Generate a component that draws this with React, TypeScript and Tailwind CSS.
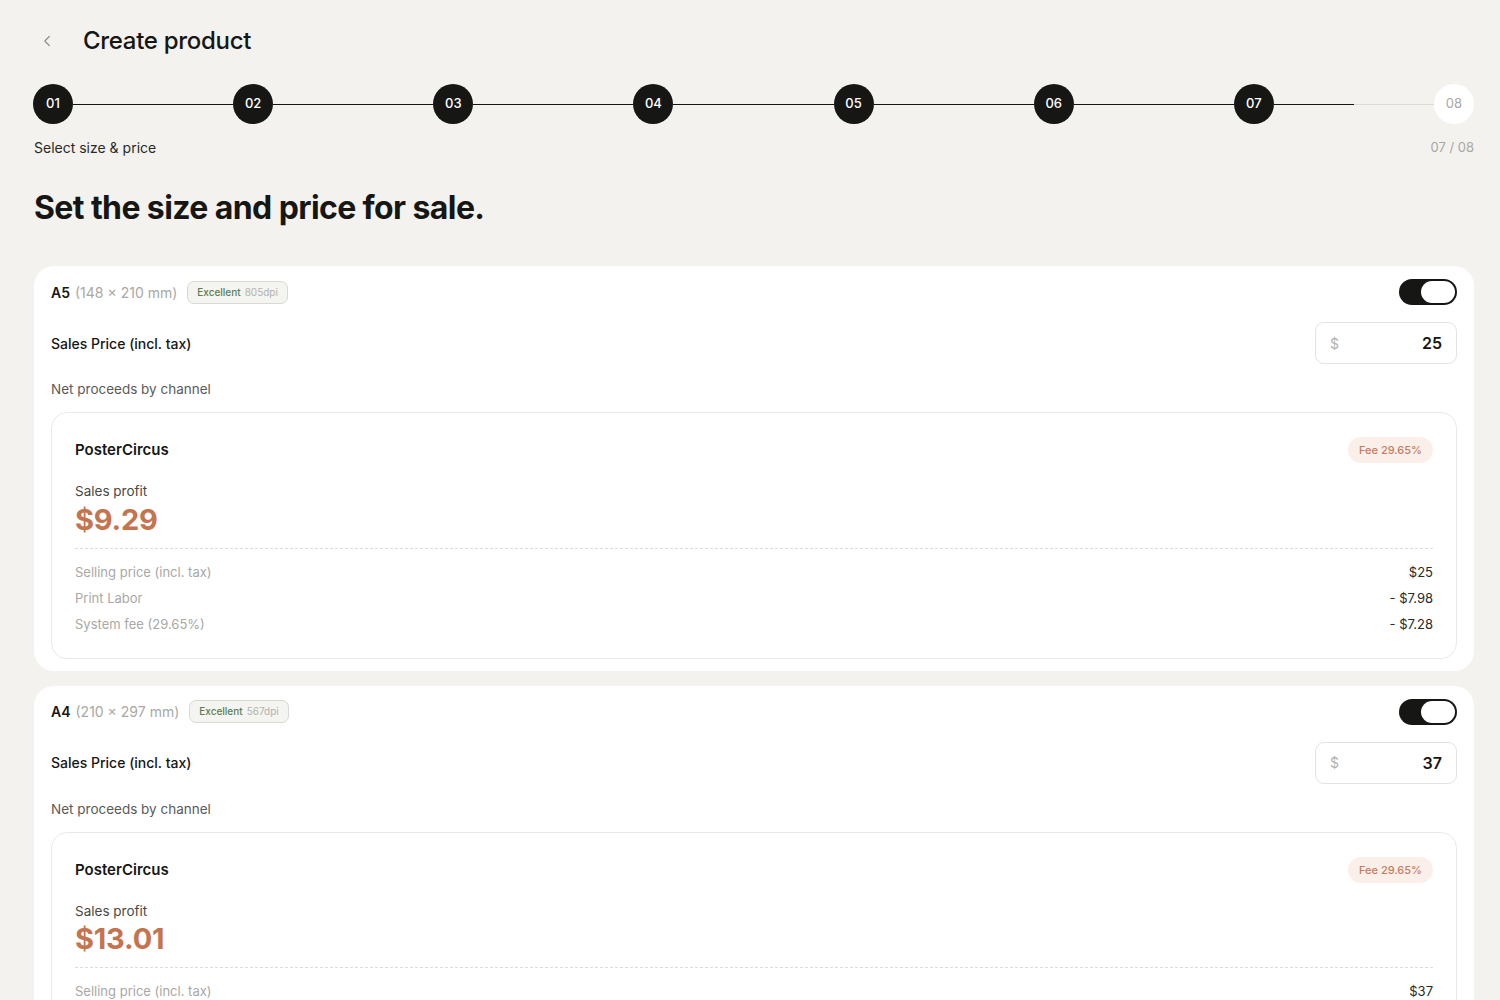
import React from 'react';
import { ChevronLeft } from 'lucide-react';

type Line = { label: string; value: string };

type Size = {
  code: string;
  dims: string;
  dpi: string;
  price: string;
  profit: string;
  lines: Line[];
};

const sizes: Size[] = [
  {
    code: 'A5',
    dims: '(148 × 210 mm)',
    dpi: '805dpi',
    price: '25',
    profit: '$9.29',
    lines: [
      { label: 'Selling price (incl. tax)', value: '$25' },
      { label: 'Print Labor', value: '- $7.98' },
      { label: 'System fee (29.65%)', value: '- $7.28' },
    ],
  },
  {
    code: 'A4',
    dims: '(210 × 297 mm)',
    dpi: '567dpi',
    price: '37',
    profit: '$13.01',
    lines: [
      { label: 'Selling price (incl. tax)', value: '$37' },
      { label: 'Print Labor', value: '- $10.98' },
      { label: 'System fee (29.65%)', value: '- $10.97' },
    ],
  },
];

const steps = ['01', '02', '03', '04', '05', '06', '07', '08'];
const current = 7;

const Stepper: React.FC = () => (
  <div className="flex items-center -ml-px">
    {steps.map((s, i) => {
      const done = i < current;
      return (
        <React.Fragment key={s}>
          <div
            className={
              done
                ? 'w-10 h-10 shrink-0 rounded-full bg-[#161614] text-white text-[13px] font-medium flex items-center justify-center'
                : 'w-10 h-10 shrink-0 rounded-full bg-white text-[#a9a8a4] text-[13px] flex items-center justify-center'
            }
          >
            {s}
          </div>
          {i < steps.length - 1 &&
            (i + 1 < current ? (
              <div className="flex-1 h-px bg-[#161614]" />
            ) : (
              // segment leading to the current step is half filled
              <div className="flex-1 flex">
                <div className="flex-1 h-px bg-[#161614]" />
                <div className="flex-1 h-px bg-[#dcdbd7]" />
              </div>
            ))}
        </React.Fragment>
      );
    })}
  </div>
);

const Toggle: React.FC = () => (
  <div className="w-[58px] h-[26px] rounded-full bg-[#161614] p-[2px] flex justify-end">
    <div className="w-[34px] h-[22px] rounded-full bg-white" />
  </div>
);

const SizeCard: React.FC<{ size: Size }> = ({ size }) => (
  <div className="bg-white rounded-[20px] px-[17px] pt-[13px] pb-[12px]">
    <div className="flex items-center justify-between h-[26px]">
      <div className="flex items-center text-[14px]">
        <span className="font-semibold text-[#161614]">{size.code}</span>
        <span className="ml-[5px] text-[#a9a8a4]">{size.dims}</span>
        <span className="ml-[10px] h-[23px] px-[9px] rounded-[7px] border border-[#d9d9d3] bg-[#f4f4f0] flex items-center text-[10px] gap-[4px]">
          <span className="font-medium text-[#5f7d55]">Excellent</span>
          <span className="text-[#b3b2ad]">{size.dpi}</span>
        </span>
      </div>
      <Toggle />
    </div>

    <div className="flex items-center justify-between mt-[17px]">
      <span className="text-[14px] font-medium text-[#161614]">Sales Price (incl. tax)</span>
      <div className="w-[142px] h-[42px] rounded-[9px] border border-[#e4e3df] px-[14px] flex items-center justify-between">
        <span className="text-[14px] text-[#b3b2ad]">$</span>
        <span className="text-[16px] font-semibold text-[#161614]">{size.price}</span>
      </div>
    </div>

    <div className="mt-[15px] text-[13.5px] text-[#5b5a57]">Net proceeds by channel</div>

    <div className="mt-[13px] rounded-[16px] border border-[#ebeae6] px-[23px] pt-[24px] pb-[20px]">
      <div className="flex items-center justify-between h-[26px]">
        <span className="text-[15px] font-semibold text-[#161614]">PosterCircus</span>
        <span className="h-[26px] px-[11px] rounded-full bg-[#fbefea] text-[#c47b5e] text-[11px] font-medium flex items-center">
          Fee 29.65%
        </span>
      </div>

      <div className="mt-[18px] text-[13.5px] text-[#4a4946]">Sales profit</div>
      <div className="text-[29px] font-bold text-[#c4744f] leading-[36px] tracking-[-0.2px]">{size.profit}</div>

      <div className="mt-[10px] border-t border-dashed border-[#dddcd8]" />

      <div className="mt-[11px] flex flex-col">
        {size.lines.map((l) => (
          <div key={l.label} className="flex items-center justify-between h-[26px] text-[13px]">
            <span className="text-[#a9a8a4]">{l.label}</span>
            <span className="text-[#2a2a28]">{l.value}</span>
          </div>
        ))}
      </div>
    </div>
  </div>
);

export default function App() {
  return (
    <div
      className="min-h-screen bg-[#f3f2ee] pl-[34px] pr-[26px] pt-[24px] pb-10 text-[#161614]"
      style={{ fontFamily: 'Inter, "Noto Sans", sans-serif' }}
    >
      <header className="flex items-center h-[34px]">
        <ChevronLeft className="w-[18px] h-[18px] text-[#8f8e8a] ml-[4px]" strokeWidth={1.6} />
        <h1 className="ml-[27px] text-[24px] font-medium tracking-[-0.3px]">Create product</h1>
      </header>

      <div className="mt-[26px]">
        <Stepper />
      </div>

      <div className="mt-[13px] flex items-center justify-between text-[14px]">
        <span className="text-[#2a2a28]">Select size &amp; price</span>
        <span className="text-[#a9a8a4] text-[13px]">07 / 08</span>
      </div>

      <h2 className="mt-[28px] text-[32px] font-bold tracking-[-0.6px] leading-[44px]">
        Set the size and price for sale.
      </h2>

      <div className="mt-[36px] flex flex-col gap-[15px]">
        {sizes.map((s) => (
          <SizeCard key={s.code} size={s} />
        ))}
      </div>
    </div>
  );
}
